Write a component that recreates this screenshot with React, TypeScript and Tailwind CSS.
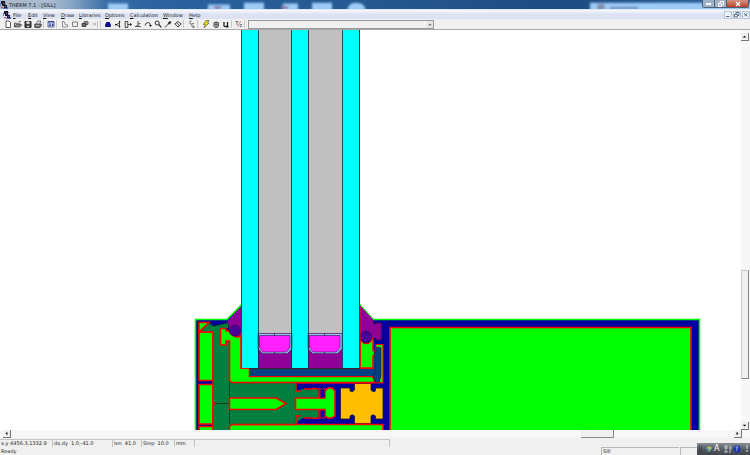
import type { ReactNode } from "react";

interface Tool {
	label: string;
	icon: ReactNode;
}

const menus = [
	{ label: "File", width: "w-[15px]" },
	{ label: "Edit", width: "w-[15px]" },
	{ label: "View", width: "w-[18px]" },
	{ label: "Draw", width: "w-[18px]" },
	{ label: "Libraries", width: "w-[26px]" },
	{ label: "Options", width: "w-[25px]" },
	{ label: "Calculation", width: "w-[33px]" },
	{ label: "Window", width: "w-[26px]" },
	{ label: "Help", width: "w-[18px]" },
];

const toolGroups: Tool[][] = [
	[
		{
			label: "New",
			icon: <path d="M2 1h3l1.500 1.500V7.500H2z" fill="#fff" stroke="#333" strokeWidth=".8" />,
		},
		{
			label: "Open",
			icon: (
				<>
					<path d="M.5 7V3h2l.6.8H6V5" fill="#ddd" stroke="#333" strokeWidth=".8" />
					<path d="M.5 7 2 4.700h5.700L6 7z" fill="#999" stroke="#333" strokeWidth=".7" />
					<path d="M4.500 1.800Q6 .7 7 2.200" fill="none" stroke="#333" strokeWidth=".7" />
				</>
			),
		},
		{
			label: "Save",
			icon: (
				<>
					<path d="M1 1.500h6v6H1z" fill="#444" stroke="#222" />
					<path d="M2.400 1.500h3.200v2.300H2.400z" fill="#eee" />
					<path d="M3 5.800h2.300v1.500H3z" fill="#ccc" />
				</>
			),
		},
		{
			label: "Print",
			icon: (
				<>
					<path d="M2.500 3.500 3.500 1h3.300l-1 2.500" fill="#eee" stroke="#444" strokeWidth=".7" />
					<path d="M.8 4h6.400v2L6 7.500H.8z" fill="#777" stroke="#333" strokeWidth=".8" />
					<path d="M2 5.500h3" stroke="#ddd" strokeWidth=".6" />
				</>
			),
		},
	],
	[
		{
			label: "Properties",
			icon: (
				<>
					<path d="M1 1.500h6v5.500H1z" fill="#e8ecff" stroke="#2c3f8c" strokeWidth=".8" />
					<path d="M1 2h6M2 4h2M2 5.500h2" stroke="#2c3f8c" />
					<path d="M4.800 3.500h1.500v2.500H4.800z" fill="#2c3f8c" />
				</>
			),
		},
	],
	[
		{
			label: "Draw polygon",
			icon: <path d="M1.500 1v6h5V5L4 4.500 3.500 2z" fill="none" stroke="#777" strokeWidth=".8" />,
		},
		{
			label: "Draw rectangle",
			icon: <path d="M1.500 2h5v4.500h-5z" fill="none" stroke="#777" strokeWidth=".9" />,
		},
		{
			label: "Fill void",
			icon: (
				<>
					<path d="M3 1.500h4V4.500H3z" fill="#999" stroke="#555" strokeWidth=".8" />
					<path d="M1 3.500h4v3H1z" fill="#666" stroke="#333" strokeWidth=".8" />
				</>
			),
		},
		{
			label: "Boundary",
			icon: <path d="M1 4h4M6.500 1v6.500M3.500 2.500 5 4 3.500 5.500" fill="none" stroke="#aaa" strokeWidth=".8" />,
		},
	],
	[
		{
			label: "Fill",
			icon: <path d="M1.200 7V4.500L2.500 2h3l1.300 2.500V7z" fill="#0c0c8a" />,
		},
		{
			label: "Edge",
			icon: (
				<>
					<path d="M5.500 1v6.500M5 3 2.500 4.500 5 6" fill="none" stroke="#222" strokeWidth=".8" />
					<path d="M1 4h2v1.200H1zM5 1h1.200v1.200H5zM5 6h1.200v1.200H5z" fill="#111" />
				</>
			),
		},
		{
			label: "Move",
			icon: (
				<>
					<path d="M1.200 1.500h2.600v6H1.200z" fill="none" stroke="#222" strokeWidth=".8" />
					<path d="M4 4.500h3.500M6 3l1.500 1.500L6 6" fill="none" stroke="#222" strokeWidth=".8" />
				</>
			),
		},
		{
			label: "Set origin",
			icon: <path d="M4 1v5M1 6.500h6M4 4 6.500 3.500M1.500 7l2-2" fill="none" stroke="#333" strokeWidth=".8" />,
		},
		{
			label: "Rotate",
			icon: (
				<>
					<path d="M1 5.500Q2 2 4.500 2.500 6.500 3 6.500 6" fill="none" stroke="#222" strokeWidth=".9" />
					<path d="M5 5h3L6.500 7z" fill="#222" />
				</>
			),
		},
		{
			label: "Zoom",
			icon: (
				<>
					<circle cx="3.200" cy="3" r="2" fill="#eee" stroke="#222" strokeWidth=".9" />
					<path d="m4.700 4.500 2.600 2.800" stroke="#222" strokeWidth="1.200" />
				</>
			),
		},
		{
			label: "Pick material",
			icon: (
				<>
					<path d="m1 7.500 3.500-3.700" stroke="#444" />
					<path d="m3.700 3 1.500 1.700L7.500 2.300 6.200 1z" fill="#222" />
				</>
			),
		},
		{
			label: "Measure",
			icon: <path d="m.8 4 3.200-2.500L7.200 4 4 7zM2.500 2.500 5.600 6" fill="none" stroke="#333" strokeWidth=".9" />,
		},
	],
	[
		{
			label: "Repeat",
			icon: <path d="M3.500 1H2v3h2v3h2M4 3.500h2M5 5.500l1.500 1.300L5 7.700" fill="none" stroke="#555" strokeWidth=".7" />,
		},
	],
	[
		{
			label: "Calculate",
			icon: <path d="M4 .5h3L5.500 3H7L2 8l1.200-3.500H1.500z" fill="#e8e300" stroke="#444" strokeWidth=".6" />,
		},
		{
			label: "Show results",
			icon: (
				<>
					<path d="M2 2.500h4.500v4L5.500 7.500H3L2 6.500z" fill="#aaa" stroke="#555" strokeWidth=".9" />
					<path d="M2 4.500h4.500M4.200 1v6" stroke="#555" strokeWidth=".7" />
				</>
			),
		},
		{
			label: "U-factors",
			icon: <path d="M2 2v3.500Q2 6.700 3.500 6.700 5.500 6.700 5.500 5V2v4.800h1" fill="none" stroke="#111" strokeWidth="1.200" />,
		},
	],
	[
		{
			label: "Units",
			icon: (
				<>
					<path d="M.5 1.500h3M2 1.500V5M7 6.500Q5 7.500 5 5.500 5 4 7 4.500" fill="none" stroke="#555" strokeWidth=".8" />
					<path d="M5.800 1 2.500 7" stroke="#d06060" strokeWidth=".7" />
				</>
			),
		},
	],
];

const groupGaps = ["", "ml-[3px]", "ml-[4px]", "ml-[3px]", "ml-[4px]", "ml-[4px]", "ml-[3px]"];

const readouts = [
	{ text: "x,y 4456.3,1332.9", width: "w-[53px]" },
	{ text: "dx,dy  1.0,-41.0", width: "w-[60px]" },
	{ text: "len  41.0", width: "w-[29px]" },
	{ text: "Step  10.0", width: "w-[33px]" },
	{ text: "mm", width: "w-[20px]" },
	{ text: "", width: "w-[195px]" },
];

const AppIcon = () => (
	<svg viewBox="0 0 8 8" className="size-2 shrink-0" aria-hidden="true">
		<path d="M1 0h4v3l1 1h1v3H4V5H2V3H1z" fill="#1c1830" />
		<path d="M0 2h1v3H0zM5 1h1v1H5z" fill="#6f7cc8" />
		<path d="M1 6h2v1H1zM3 2h1v1H3z" fill="#c04a48" />
		<path d="M5 5h1v1H5zM7 6h1v2H3V7h4z" fill="#5a68c0" />
	</svg>
);

const TitleBar = () => (
	<header className="relative flex h-[10px] shrink-0 items-center overflow-hidden border-b border-[#dfe7f2] bg-[#24568f] text-[5px]">
		<svg
			viewBox="0 0 750 10"
			preserveAspectRatio="none"
			className="absolute inset-0 size-full"
			aria-hidden="true"
		>
			<defs>
				<linearGradient id="aero">
					<stop offset="0" stopColor="#a9b9cc" />
					<stop offset=".07" stopColor="#a8bbd0" />
					<stop offset=".1" stopColor="#7f9fc2" />
					<stop offset=".14" stopColor="#3c6fa6" />
					<stop offset=".2" stopColor="#2b62a0" />
					<stop offset=".5" stopColor="#25588f" />
					<stop offset=".75" stopColor="#1d4a80" />
					<stop offset="1" stopColor="#2b649e" />
				</linearGradient>
				<filter id="soft" x="-20%" y="-50%" width="140%" height="200%">
					<feGaussianBlur stdDeviation="1" />
				</filter>
			</defs>
			<path d="M0 0h750v10H0z" fill="url(#aero)" />
			<g filter="url(#soft)" fill="#9ccbf5">
				<path d="M108 4h20v8h-20zM208 5h22v7h-22zM244 3h20v9h-20zM283 4h15v8h-15zM312 3h20v9h-20zM347 12q1-9 9-9 9 0 10 9z" />
				<path d="M590 3h165v9H590z" />
				<circle cx="601" cy="8" r="4" fill="#8093b0" />
				<path d="M610 8h28v2h-28z" fill="#5279a8" />
				<path d="M214 7h7v3h-7zM281 7h7v3h-7z" fill="#8d6f9c" />
			</g>
		</svg>
		<div className="relative flex flex-1 items-center">
			<AppIcon />
			<h1 className="ml-px leading-2 text-[#101820]">THERM 7.1 - [SILL]</h1>
		</div>
		<div className="relative mr-px flex h-2 self-start overflow-hidden rounded-b-xs border border-t-0 border-[#4d6078]">
			<button
				aria-label="Minimize"
				className="flex w-3 items-center justify-center border-r border-[#4d6078] bg-[#9fb2c8]"
			>
				<span className="h-[2px] w-[5px] bg-white" />
			</button>
			<button
				aria-label="Restore"
				className="flex w-3 items-center justify-center border-r border-[#4d6078] bg-[#9fb2c8]"
			>
				<svg viewBox="0 0 6 6" className="size-[6px]" fill="none" stroke="#fff">
					<path d="M2 1.500V.5h3.500v3.500h-1M.5 2.500h3v3h-3z" />
				</svg>
			</button>
			<button
				aria-label="Close"
				className="flex w-[21px] items-center justify-center bg-linear-to-b from-[#d59384] to-[#bd3f24]"
			>
				<svg viewBox="0 0 6 6" className="size-[6px]" stroke="#fff" strokeWidth="1.300">
					<path d="m1 1 4 4M5 1 1 5" />
				</svg>
			</button>
		</div>
	</header>
);

const MenuBar = () => (
	<nav className="flex h-[9px] shrink-0 items-center bg-linear-to-b from-[#f6f8fc] via-[#dce2f2] to-[#dde2f0] pl-[3px] text-[5px] text-[#15151c]">
		<AppIcon />
		<div className="ml-[2px] flex flex-1">
			{menus.map(({ label, width }) => (
				<button key={label} className={`${width} shrink-0 text-left leading-2`}>
					<u>{label[0]}</u>
					{label.slice(1)}
				</button>
			))}
		</div>
		<div className="flex h-2 gap-px text-[#5b6b80]">
			{[
				["Minimize document", "M2 5.500h3.500"],
				["Restore document", "M3 3V1.500h3v3H5M1.500 3.500h3v2.500h-3z"],
				["Close document", "m2 2 3.500 3.500M5.500 2 2 5.500"],
			].map(([label, d]) => (
				<button
					key={label}
					aria-label={label}
					className="flex w-2 items-center justify-center border border-[#b4c6da] bg-[#f0f5fb]"
				>
					<svg viewBox="0 0 8 8" className="size-2 shrink-0" fill="none" stroke="currentColor">
						<path d={d} />
					</svg>
				</button>
			))}
		</div>
	</nav>
);

const Toolbar = () => (
	<div className="flex h-[11px] shrink-0 items-center border-b border-[#a8a8a8] bg-[#f0f0f0] pl-[3px]">
		{toolGroups.map((group, i) => (
			<div key={group[0].label} className={`flex shrink-0 items-center ${groupGaps[i]}`}>
				{group.map(({ label, icon }) => (
					<button
						key={label}
						aria-label={label}
						className="flex h-[10px] w-[10px] items-center justify-center"
					>
						<svg viewBox="0 0 8 8" className="size-2" fill="none">
							{icon}
						</svg>
					</button>
				))}
				<span className="-mr-px h-2 w-px bg-[#c8c8c8]" />
			</div>
		))}
		<div className="relative ml-1 flex w-[186px]">
			<select
				aria-label="Material"
				className="h-[9px] w-full appearance-none border border-[#999] bg-[#f1f1f1] text-[5px]"
			/>
			<svg
				viewBox="0 0 6 7"
				className="pointer-events-none absolute top-px right-px h-[7px] w-[6px]"
				aria-hidden="true"
			>
				<path d="M0 0h6v7H0z" fill="#e4e4e4" />
				<path d="M1.500 3h3L3 5z" fill="#777" />
			</svg>
		</div>
	</div>
);

interface SpacerProps {
	x: number;
}

const Spacer = ({ x }: SpacerProps) => (
	<g transform={`translate(${x} 333)`}>
		<path d="M0 0h34v35H0z" fill="#900098" />
		<path d="M0 .5h34v15L29.500 20.500H4.500L0 15.500z" fill="#9cc8f4" stroke="#30305c" strokeWidth=".6" />
		<path d="M1.500 2.500h30.500v12L28.500 19h-23.500L1.500 14.500z" fill="#ff20ff" stroke="#402060" strokeWidth=".7" />
		<path d="M16.500 0v2.500M16.500 19v2" stroke="#222" strokeWidth=".7" />
	</g>
);

const SillSection = () => (
	<svg
		viewBox="0 30 741 400"
		preserveAspectRatio="xMinYMin meet"
		className="size-full"
		role="img"
		aria-label="Sill cross section"
	>
		{/* frame body */}
		<path
			d="M195.500 435V319.500H227L241.500 305V368H360V305L373 319.500H699.500V435z"
			fill="#0000a0"
			stroke="#00ff00"
			strokeWidth="1.600"
		/>
		<path d="M390 435V327.500H691V435z" fill="#00ff00" stroke="#f00" strokeWidth="1.600" />
		<path d="M383.500 327v56M383.500 383H390M390 320v7" fill="none" stroke="#000050" strokeWidth=".6" />

		{/* left column */}
		<g fill="#00ff00" stroke="#f00" strokeWidth="1.600">
			<path d="M199 322.500h10.500L199 332h14v48.500h-14zM199 384.500h14v39.500h-14zM199 426.500h14V435h-14z" />
			<path d="M229 424.500H383V435H229z" />
		</g>
		<path
			d="M208 322.500 213 326 228.500 323V328H220.500V345H226V341H229.500V380L232 382.500H296.500V424H232L229 426.500V431H213V405L214.500 403.500 213 402V332H199z"
			fill="#008040"
		/>
		<path
			d="M199 332H213V402L214.500 403.500 213 405V431M229.500 431V426.500L232 424.500H296M209 322.500 199 332"
			fill="none"
			stroke="#f00"
			strokeWidth="1.600"
		/>
		<path
			d="M209 322.500 214 326 228.500 322.500 229 331M229.500 382v16M229.500 409v15M215 403.500H229"
			fill="none"
			stroke="#002818"
			strokeWidth=".8"
		/>
		<path d="M229 319.500 241.500 306V336H229V325L227 322z" fill="#900098" />
		<path
			d="M241 336Q236 339 230 333L229 331H226V328.500H220.500V345H226V341H229.500V380.500L232 382.500H373L375 380 372 376.500H249.500V368H241z"
			fill="#00ff00"
			stroke="#f00"
			strokeWidth="1.600"
		/>
		<circle cx="235" cy="330.500" r="5.500" fill="#4b0096" stroke="#30005c" strokeWidth=".8" />
		<path d="M229.500 398H276L286 403.500 276 409.500H229.500z" fill="#00ff00" stroke="#f00" strokeWidth="1.600" />

		{/* setting block under the glass */}
		<path
			d="M249.500 368.500H373.500V356L375 353 373 350H376V347H380V352L381 377 380 382H376L373.500 376.500H249.500z"
			fill="#004080"
			stroke="#f00"
		/>

		{/* right gasket */}
		<path d="M360 331V368H373V356L375.500 354 373 350V336H371z" fill="#00ff00" stroke="#f00" strokeWidth="1.600" />
		<path d="M376 348V344.500H383V382.500H379L380 378V348z" fill="#00ff00" stroke="#f00" strokeWidth="1.200" />
		<path
			d="M376 350V348L378.500 347 381 348V376L379 382H375L373.500 378V374H375V356L374 354z"
			fill="#004080"
			stroke="#001c48"
			strokeWidth=".5"
		/>
		<path d="M360 305.500 373.500 320V324H376V323H381.500V340H376V338H373L371 336H360z" fill="#900098" />
		<path d="M373.500 321V324H376V323H381.500V340H376V338H373" fill="none" stroke="#400050" strokeWidth=".7" />
		<path d="M360.500 337Q362 343.500 366.500 343.500 371 343 372 337" fill="none" stroke="#f00" strokeWidth="1.600" />
		<circle cx="366" cy="337" r="5.800" fill="#4b0096" stroke="#30005c" strokeWidth=".8" />

		{/* thermal break */}
		<path d="M297 384V391L303 389 308 390 314 388 319 391V398H296V391zM296 409H319V416L314 419 308 417 303 418 296 424z" fill="#008040" />
		<path d="M289 390.500H316L318.500 389 319 398H289zM289 409.500H319V418L316 417 289 417z" fill="#008040" />
		<path d="M298 384H312L309 389H303L298 386zM298 423H312L309 418H303L298 421z" fill="#0000a0" />
		<path
			d="M296 383V391H301M296 424V416H301M304 389H311L315 388.500 319 389V398M304 418H311L315 418.500 319 418V409"
			fill="none"
			stroke="#f00"
			strokeWidth="1.300"
		/>
		<path
			d="M295.500 398H325V391L328 388H332L335 391V416L332 418H328L325 416V409.500H295.500z"
			fill="#00ff00"
			stroke="#f00"
			strokeWidth="1.600"
		/>
		<path d="M320 389H325V398H320zM320 410H325V418H320z" fill="#0000a0" stroke="#f00" strokeWidth=".9" />
		<path
			d="M340.500 388H350V391Q352.500 393 354.500 390V383.500H371V390Q373 393 375.500 391V388H383V419H375.500V416Q373 413.500 371 416V423.500H354.500V416Q352.500 413.500 350 416V419H340.500z"
			fill="#ffbf00"
			stroke="#201838"
			strokeWidth=".8"
		/>
		<path d="M296 383H383M354.500 424H371" stroke="#f00" strokeWidth="1.200" />

		{/* triple glazing */}
		<path d="M241.500 30H360V368H241.500z" fill="#00ffff" />
		<path d="M258.500 30H291.500V333H258.500zM308.500 30H342.500V333H308.500z" fill="#c0c0c0" />
		<Spacer x={258} />
		<Spacer x={308} />
		<path
			d="M241.500 30V368.500H360M258.500 30V368M291.500 30V368M308.500 30V368M342.500 30V368"
			fill="none"
			stroke="#102830"
			strokeWidth=".8"
		/>
		<path d="M359.500 30V368" stroke="#801010" />
		<path d="M241.500 332V368.500H249M360 306V368" fill="none" stroke="#f00" strokeWidth="1.200" />
	</svg>
);

const arrows = {
	up: "M2 5h4L4 3z",
	down: "M2 3h4L4 5z",
	left: "M5 2v4L3 4z",
	right: "M3 2v4l2-2z",
};

const ScrollButton = ({ direction }: { direction: keyof typeof arrows }) => (
	<button
		aria-label={`Scroll ${direction}`}
		className="size-2 shrink-0 border-r border-b border-[#777] bg-[#f0f0f0]"
	>
		<svg viewBox="0 0 8 8" className="size-[7px]">
			<path d={arrows[direction]} fill="#000" />
		</svg>
	</button>
);

const StatusBar = () => (
	<footer className="relative flex h-[17px] shrink-0 flex-col bg-[#f0f0f0] text-[5px] text-[#222]">
		<div className="flex h-[9px] items-center">
			{readouts.map(({ text, width }) => (
				<output
					key={text}
					className={`${width} h-2 shrink-0 border-t border-r border-[#c4c4c4] pl-px leading-[7px] whitespace-pre`}
				>
					{text}
				</output>
			))}
		</div>
		<div className="flex h-2 leading-2">
			<span className="flex-1 pl-px">Ready</span>
			<span className="w-[78px] border-t border-l border-[#b8b8b8] pl-px leading-[7px]">Sill</span>
			<span className="mr-[52px] ml-px w-[18px] border-t border-l border-[#b8b8b8]" />
		</div>
		<div className="absolute right-0 bottom-0 flex h-3 w-[53px] items-center bg-linear-to-b from-[#8a8e92] via-[#565c62] to-[#3f454b]">
			<svg viewBox="0 0 53 12" className="h-3 w-[53px]" aria-hidden="true">
				<path d="M2 3h1M2 5h1M2 7h1M2 9h1M4 4h1M4 6h1M4 8h1" stroke="#25292d" />
				<path d="M9 5 12 3l3 2-3 4z" fill="#7fc07a" />
				<path d="m12 3 3 2-3 1z" fill="#e3b34c" />
				<path d="m9 5 3 1v3z" fill="#4b8fd0" />
				<path d="M27 3h4M29 3v6M27 5h4M27 9h4M33 2v8M33 5h2" stroke="#d8dde0" strokeWidth=".8" />
				<circle cx="40" cy="6" r="3.500" fill="#1636b8" />
				<path d="M49 3h2M49 5h2M49 8h2" stroke="#dfe3e6" />
			</svg>
			<span className="absolute left-[17px] text-[8px] leading-3 text-white">A</span>
			<span className="absolute left-[38px] text-[6px] leading-3 text-white">?</span>
		</div>
	</footer>
);

const App = () => (
	<div className="flex h-screen flex-col overflow-hidden bg-[#f0f0f0] font-['DejaVu_Sans','Open_Sans',sans-serif]">
		<TitleBar />
		<MenuBar />
		<Toolbar />
		<main className="flex min-h-0 flex-1 flex-col">
			<div className="flex min-h-0 flex-1">
				<div className="min-w-0 flex-1 bg-white">
					<SillSection />
				</div>
				<div className="flex w-[9px] shrink-0 flex-col bg-[#f7f7f7] pt-[3px] pr-px">
					<ScrollButton direction="up" />
					<div className="flex-[230]" />
					<div className="flex-[108] border border-[#ccc] border-r-[#888] border-b-[#888] bg-[#f0f0f0]" />
					<div className="flex-[43]" />
					<ScrollButton direction="down" />
				</div>
			</div>
			<div className="flex h-2 shrink-0 bg-[#f7f7f7] pr-2 pl-[3px]">
				<ScrollButton direction="left" />
				<div className="flex-[571]" />
				<div className="flex-[32] border-r border-b border-[#888] bg-[#f0f0f0]" />
				<div className="flex-[120]" />
				<ScrollButton direction="right" />
			</div>
		</main>
		<StatusBar />
	</div>
);

export default App;
